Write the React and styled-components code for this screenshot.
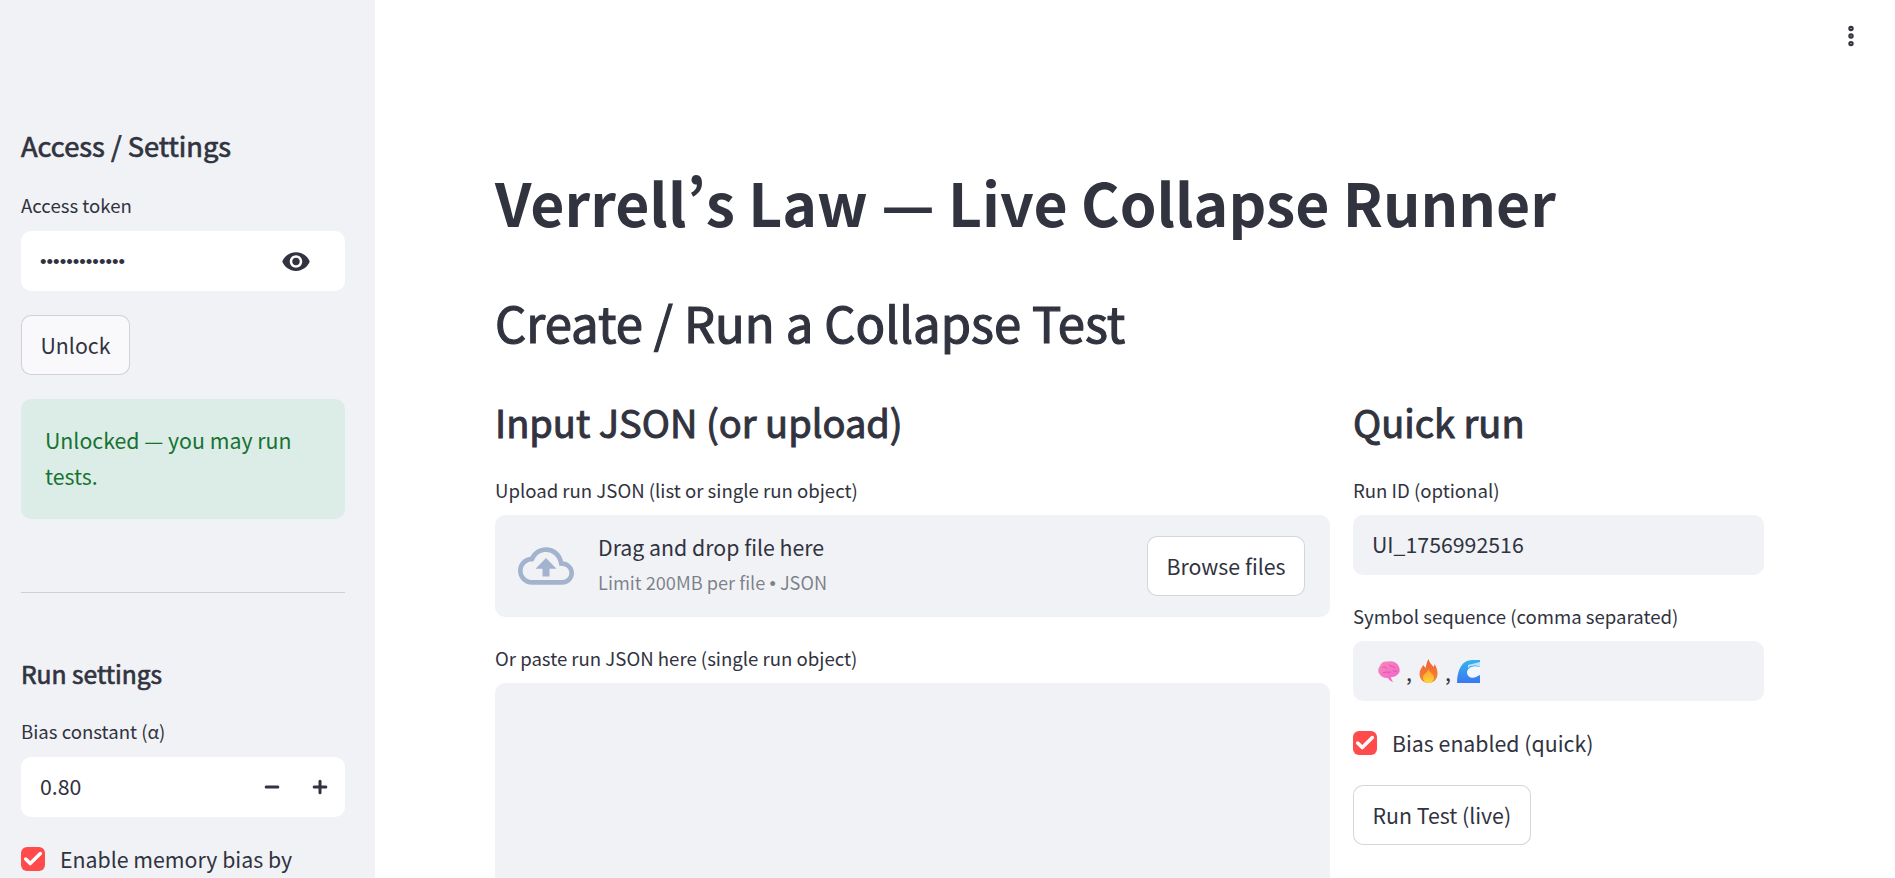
import React from 'react';
import styled, { createGlobalStyle } from 'styled-components';
import { Minus, Plus, MoreVertical, Check } from 'lucide-react';

const GlobalStyle = createGlobalStyle`
    html, body {
        margin: 0;
        height: 100%;
        overflow: hidden;
        background: #ffffff;
    }
    * {
        box-sizing: border-box;
    }
    body {
        font-family: "Noto Sans CJK SC", "Noto Sans", sans-serif;
        font-feature-settings: "pwid";
        color: #31333f;
    }
`;

const Page = styled.div`
    display: flex;
    height: 100vh;
    overflow: hidden;
`;

const Sidebar = styled.aside`
    flex: 0 0 375px;
    height: 100%;
    background: #f0f2f6;
    padding: 127px 30px 0 21px;
    overflow: hidden;
`;

const Main = styled.main`
    flex: 1;
    position: relative;
    height: 100%;
    padding: 165px 131px 0 120px;
    overflow: hidden;
`;

const MenuButton = styled.button`
    position: absolute;
    top: 20px;
    right: 28px;
    width: 32px;
    height: 32px;
    padding: 0;
    border: none;
    background: none;
    color: #31333f;
    display: flex;
    align-items: center;
    justify-content: center;
`;

const Title = styled.h1`
    margin: 0;
    padding-bottom: 4px;
    font-size: 58.9px;
    font-weight: 700;
    line-height: 74px;
    white-space: nowrap;
`;

const Subtitle = styled.h2`
    margin: 49px 0 0;
    padding-bottom: 2px;
    font-size: 49px;
    font-weight: 400;
    -webkit-text-stroke: 1.2px #31333f;
    line-height: 60px;
`;

const Columns = styled.div`
    display: grid;
    grid-template-columns: 835px 411px;
    column-gap: 23px;
    margin-top: 45px;
`;

const Column = styled.div`
    display: flex;
    flex-direction: column;
    min-width: 0;
`;

const SectionTitle = styled.h3`
    margin: 0;
    font-size: 38px;
    font-weight: 400;
    -webkit-text-stroke: 1px #31333f;
    line-height: 46px;
    padding-bottom: 4px;
`;

const SideTitle = styled.h3`
    margin: ${(p) => p.$top || 0}px 0 0;
    font-size: ${(p) => p.$size || 27.3}px;
    font-weight: 400;
    -webkit-text-stroke: 0.7px #31333f;
    line-height: ${(p) => (p.$line || 40) - 4}px;
    padding-bottom: 4px;
`;

const Label = styled.label`
    display: block;
    margin-top: ${(p) => p.$top}px;
    margin-bottom: ${(p) => p.$bottom || 13}px;
    font-size: 18.6px;
    line-height: 23px;
    padding-bottom: 1px;
`;

const Box = styled.div`
    display: flex;
    align-items: center;
    height: 60px;
    border-radius: 10px;
    padding: 0 ${(p) => p.$right || 20}px 3px 19px;
    background: ${(p) => (p.$white ? '#ffffff' : '#f0f2f6')};
`;

const TextInput = styled.input`
    flex: 1;
    min-width: 0;
    border: none;
    outline: none;
    background: none;
    padding: 0;
    font-family: inherit;
    font-size: 21.3px;
    color: #31333f;
`;

const SecretInput = styled(TextInput)`
    margin-top: 4px;
    font-family: "Liberation Sans", sans-serif;
    font-size: 18.7px;
`;

const IconAction = styled.span`
    display: flex;
    align-items: center;
    justify-content: center;
    width: 30px;
    margin-top: 3px;
    color: #31333f;
    margin-left: ${(p) => p.$left || 0}px;
`;

const Button = styled.button`
    display: block;
    height: 60px;
    margin-top: ${(p) => p.$top || 0}px;
    padding: 0 18.5px 2px;
    border: 1.25px solid rgba(49, 51, 63, 0.2);
    border-radius: 10px;
    background: ${(p) => p.$bg || '#ffffff'};
    color: #31333f;
    font-family: inherit;
    font-size: 21.3px;
    white-space: nowrap;
`;

const SuccessBox = styled.div`
    margin-top: 24px;
    padding: 23px 24px 25px;
    border-radius: 10px;
    background: #dbede6;
    color: #177233;
    font-size: 21.3px;
    line-height: 36px;
`;

const Divider = styled.hr`
    margin: 73px 0 0;
    border: none;
    border-top: 1px solid #cfd0d3;
`;

const CheckRow = styled.div`
    display: flex;
    align-items: center;
    gap: 15px;
    margin-top: ${(p) => p.$top}px;
    height: 24px;
    font-size: 21.3px;
    line-height: 22px;
    white-space: nowrap;
`;

const CheckMark = styled.span`
    flex: 0 0 24px;
    width: 24px;
    height: 24px;
    border-radius: 6px;
    background: #ff4b4b;
    color: #ffffff;
    display: flex;
    align-items: center;
    justify-content: center;
`;

const DropZone = styled.div`
    display: flex;
    align-items: center;
    height: 102px;
    padding: 0 25px 0 23px;
    border-radius: 10px;
    background: #f0f2f6;
`;

const DropText = styled.div`
    flex: 1;
    margin-left: 24px;
    display: flex;
    flex-direction: column;
`;

const DropTitle = styled.span`
    font-size: 21.3px;
    line-height: 34px;
`;

const DropHint = styled.span`
    font-size: 18.2px;
    line-height: 36px;
    color: rgba(49, 51, 63, 0.6);
`;

const Bullet = styled.span`
    font-family: "Liberation Sans", sans-serif;
`;

const TextArea = styled.div`
    height: 300px;
    border-radius: 10px;
    background: #f0f2f6;
`;

const SymbolRow = styled.div`
    display: flex;
    align-items: center;
    gap: 6px;
    margin: 3px 0 0 5px;
    font-size: 21.3px;
`;

function CloudUpload() {
    return (
        <svg width="56" height="56" viewBox="0 0 24 24" fill="#a3b2cd">
            <path d="M19.35 10.04C18.67 6.59 15.64 4 12 4 9.11 4 6.6 5.64 5.35 8.04 2.34 8.36 0 10.91 0 14c0 3.31 2.69 6 6 6h13c2.76 0 5-2.24 5-5 0-2.64-2.05-4.78-4.65-4.96zM19 18H6c-2.21 0-4-1.79-4-4 0-2.05 1.53-3.76 3.56-3.97l1.07-.11.5-.95C8.08 7.14 9.94 6 12 6c2.62 0 4.88 1.86 5.39 4.43l.3 1.5 1.53.11c1.56.1 2.78 1.41 2.78 2.96 0 1.65-1.35 3-3 3z" />
            <path d="M7.5 13.2h3v3.3h3v-3.3h3L12 8.6z" />
        </svg>
    );
}

function EyeFilled() {
    return (
        <svg width="33" height="33" viewBox="0 0 24 24" fill="#31333f">
            <path d="M12 4.5C7 4.5 2.73 7.61 1 12c1.73 4.39 6 7.5 11 7.5s9.27-3.11 11-7.5c-1.73-4.39-6-7.5-11-7.5zM12 17c-2.76 0-5-2.24-5-5s2.24-5 5-5 5 2.24 5 5-2.24 5-5 5zm0-8c-1.66 0-3 1.34-3 3s1.34 3 3 3 3-1.34 3-3-1.34-3-3-3z" />
        </svg>
    );
}

function BrainEmoji() {
    return (
        <svg width="23" height="23" viewBox="0 0 23 23" role="img" aria-label="brain">
            <defs>
                <linearGradient id="brainPink" x1="0" y1="0" x2="1" y2="1">
                    <stop offset="0" stopColor="#f78bb8" />
                    <stop offset="1" stopColor="#f25fd0" />
                </linearGradient>
            </defs>
            <path d="M3 6 C4 2 8 1 11 1.5 C15 0.5 20 2 21.5 6 C23.5 9 23 13 20 15 C18 17 15 17 14 17 C14 19 15.5 21 16 22 C14 21.5 12 20 11 18 C8 18.5 4 17 2.5 14 C0.5 12 1 8 3 6 Z" fill="url(#brainPink)" />
            <path d="M5 8 C7 6 9 7 10 9 M12 5 C14 7 17 6 18 8 M6 13 C9 11 12 13 14 12 M16 11 C18 11 19 12 20 11" fill="none" stroke="#d94f9e" strokeWidth="0.9" />
        </svg>
    );
}

function FireEmoji() {
    return (
        <svg width="21" height="24" viewBox="-1.5 0 21 24" role="img" aria-label="fire">
            <defs>
                <linearGradient id="fireOuter" x1="0" y1="0" x2="0" y2="1">
                    <stop offset="0" stopColor="#f2603a" />
                    <stop offset="1" stopColor="#f08a2c" />
                </linearGradient>
                <linearGradient id="fireInner" x1="0" y1="0" x2="0" y2="1">
                    <stop offset="0" stopColor="#ff9e2e" />
                    <stop offset="1" stopColor="#ffd53d" />
                </linearGradient>
            </defs>
            <path d="M9 0 C10 4 12 5 14 8 C15 6.5 15 6 15 5 C17 8 18 11 18 15 C18 20 14 24 9 24 C4 24 0 20 0 15 C0 11 2 9 4 6 C5 8 5.5 8.5 6 9 C7 6 7 3 9 0 Z" fill="url(#fireOuter)" />
            <path d="M9 10 C10 14 14.5 15 14.5 18.5 C14.5 21.5 12 24 9 24 C6 24 3.5 21.5 3.5 18.5 C3.5 15 8 14 9 10 Z" fill="url(#fireInner)" />
        </svg>
    );
}

function WaveEmoji() {
    return (
        <svg width="23" height="23" viewBox="0 0 23 23" role="img" aria-label="wave">
            <defs>
                <linearGradient id="waveBlue" x1="0" y1="0" x2="0" y2="1">
                    <stop offset="0" stopColor="#35b4ee" />
                    <stop offset="1" stopColor="#3a78f2" />
                </linearGradient>
            </defs>
            <path d="M0 23 C0 10 5 0 15 0 L23 0 L23 23 Z" fill="url(#waveBlue)" />
            <path d="M23 7 C17 5 11 7 10 12 C10 17 15 19 19 17 C21 16 22 15 23 15 Z" fill="#f3f8fe" />
            <path d="M11 5 L23 2 L23 7 C19 5 14 5 11 8 Z" fill="#bfe3f8" />
        </svg>
    );
}

function Tick() {
    return <Check size={22} strokeWidth={3.8} />;
}

export default function App() {
    return (
        <Page>
            <GlobalStyle />
            <Sidebar>
                <SideTitle>Access / Settings</SideTitle>
                <Label $top={26} $bottom={14}>Access token</Label>
                <Box $white $right={34}>
                    <SecretInput type="password" defaultValue="mysecrettoken" readOnly />
                    <IconAction><EyeFilled /></IconAction>
                </Box>
                <Button $top={24} $bg="#f9f9fb">Unlock</Button>
                <SuccessBox>Unlocked — you may run tests.</SuccessBox>
                <Divider />
                <SideTitle $top={64} $line={36} $size={24.6}>Run settings</SideTitle>
                <Label $top={26} $bottom={14}>Bias constant (α)</Label>
                <Box $white $right={10}>
                    <TextInput defaultValue="0.80" readOnly />
                    <IconAction><Minus size={20} strokeWidth={3.6} /></IconAction>
                    <IconAction $left={18}><Plus size={20} strokeWidth={3.6} /></IconAction>
                </Box>
                <CheckRow $top={30}>
                    <CheckMark><Tick /></CheckMark>
                    Enable memory bias by
                </CheckRow>
            </Sidebar>
            <Main>
                <MenuButton aria-label="Menu"><MoreVertical size={26} strokeWidth={3} /></MenuButton>
                <Title>Verrell’s Law — Live Collapse Runner</Title>
                <Subtitle>Create / Run a Collapse Test</Subtitle>
                <Columns>
                    <Column>
                        <SectionTitle>Input JSON (or upload)</SectionTitle>
                        <Label $top={29}>Upload run JSON (list or single run object)</Label>
                        <DropZone>
                            <CloudUpload />
                            <DropText>
                                <DropTitle>Drag and drop file here</DropTitle>
                                <DropHint>Limit 200MB per file <Bullet>•</Bullet> JSON</DropHint>
                            </DropText>
                            <Button>Browse files</Button>
                        </DropZone>
                        <Label $top={29}>Or paste run JSON here (single run object)</Label>
                        <TextArea />
                    </Column>
                    <Column>
                        <SectionTitle>Quick run</SectionTitle>
                        <Label $top={29}>Run ID (optional)</Label>
                        <Box>
                            <TextInput defaultValue="UI_1756992516" readOnly />
                        </Box>
                        <Label $top={29}>Symbol sequence (comma separated)</Label>
                        <Box>
                            <SymbolRow>
                                <BrainEmoji />,<FireEmoji />,<WaveEmoji />
                            </SymbolRow>
                        </Box>
                        <CheckRow $top={30}>
                            <CheckMark><Tick /></CheckMark>
                            Bias enabled (quick)
                        </CheckRow>
                        <div><Button $top={30}>Run Test (live)</Button></div>
                    </Column>
                </Columns>
            </Main>
        </Page>
    );
}
